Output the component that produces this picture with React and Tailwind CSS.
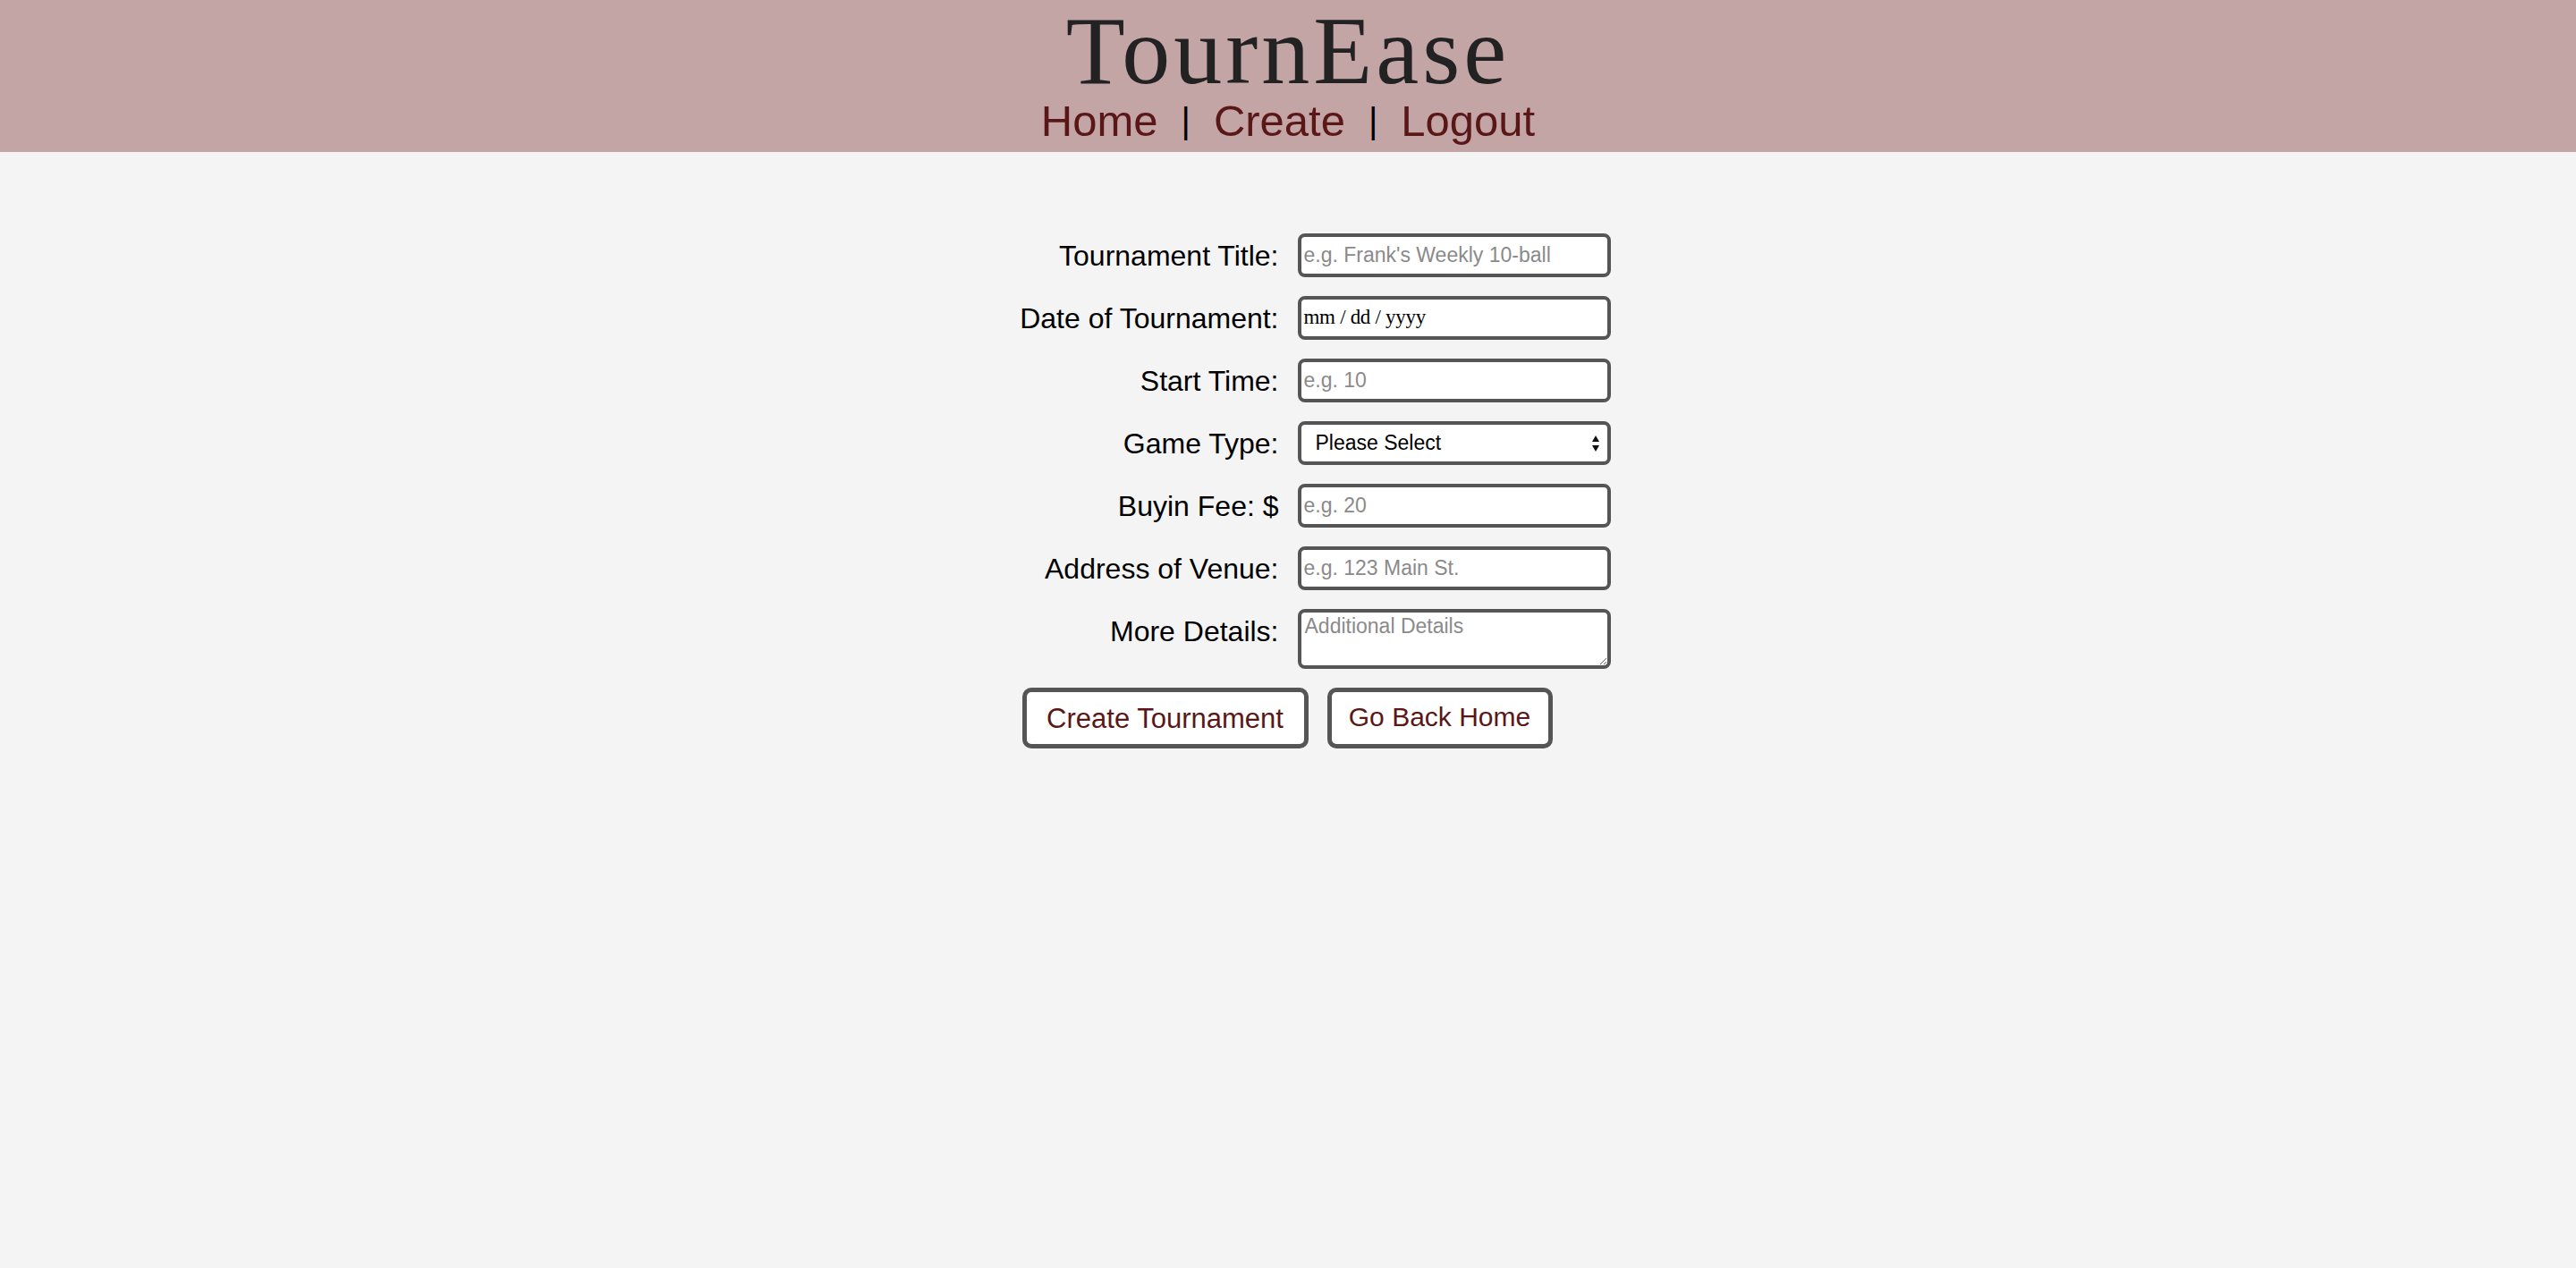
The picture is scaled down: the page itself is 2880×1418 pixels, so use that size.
import React from 'react';

const fields = [
  { label: 'Tournament Title:', placeholder: "e.g. Frank's Weekly 10-ball" },
  { label: 'Date of Tournament:', type: 'date' },
  { label: 'Start Time:', placeholder: 'e.g. 10' },
  { label: 'Game Type:', type: 'select' },
  { label: 'Buyin Fee: $', placeholder: 'e.g. 20' },
  { label: 'Address of Venue:', placeholder: 'e.g. 123 Main St.' },
];

const inputBase =
  "h-[49px] w-[350px] rounded-[8px] border-[4px] border-[#555555] bg-white text-[23px] text-black outline-none font-['Liberation_Sans',Arial,sans-serif]";

const labelCls = 'flex h-[49px] items-center justify-end whitespace-nowrap text-[32px] leading-none text-black';

const Field = ({ field }) => {
  if (field.type === 'date') {
    return (
      <div className={`${inputBase} flex items-center pl-[3px]`}>
        <span className="font-['Liberation_Serif',serif] text-[23px] tracking-[-0.3px]">mm / dd / yyyy</span>
      </div>
    );
  }
  if (field.type === 'select') {
    return (
      <div className="relative">
        <select className={`${inputBase} appearance-none pl-[16px]`} defaultValue="">
          <option value="">Please Select</option>
          <option value="8">8-ball</option>
          <option value="9">9-ball</option>
          <option value="10">10-ball</option>
        </select>
        <svg className="pointer-events-none absolute right-[12px] top-[15px]" width="10" height="20" viewBox="0 0 10 20">
          <path d="M5 1 L9 8 L1 8 Z" fill="#111" />
          <path d="M5 19 L9 12 L1 12 Z" fill="#111" />
        </svg>
      </div>
    );
  }
  return (
    <input
      type="text"
      placeholder={field.placeholder}
      className={`${inputBase} pl-[3px] placeholder:text-[#8a8a8a]`}
    />
  );
};

export default function App() {
  return (
    <div className="min-h-screen bg-[#f4f4f4] font-['Liberation_Sans',Arial,sans-serif]">
      <header className="flex h-[170px] flex-col items-center bg-[#c4a5a6]">
        <h1 className="pt-[11px] font-['Liberation_Serif',serif] text-[108px] font-normal leading-[92px] tracking-[4px] text-[#222222]">
          TournEase
        </h1>
        <nav className="mt-[8px] flex items-center gap-[26px] text-[49px] leading-[49px] text-[#5a1717]">
          <a href="#">Home</a>
          <span className="text-[40px] text-black">|</span>
          <a href="#">Create</a>
          <span className="text-[40px] text-black">|</span>
          <a href="#">Logout</a>
        </nav>
      </header>

      <main className="flex justify-center pl-[61px] pt-[91px]">
        <form className="grid grid-cols-[289px_350px] gap-x-[21px] gap-y-[21px] items-start">
          {fields.map((f) => (
            <React.Fragment key={f.label}>
              <label className={labelCls}>{f.label}</label>
              <Field field={f} />
            </React.Fragment>
          ))}
          <label className={labelCls}>More Details:</label>
          <textarea
            placeholder="Additional Details"
            className="h-[67px] w-[350px] rounded-[8px] border-[4px] border-[#555555] bg-white px-[4px] pt-[1px] text-[23px] leading-tight outline-none placeholder:text-[#8a8a8a]"
          />
          <div className="col-span-2 flex gap-[21px] pl-[2px]">
            <button
              type="submit"
              className="h-[68px] w-[320px] rounded-[10px] border-[5px] border-[#555555] bg-white pt-[3px] text-[31px] text-[#5a1717]"
            >
              Create Tournament
            </button>
            <a
              href="#"
              className="flex h-[68px] w-[252px] items-center justify-center rounded-[10px] border-[5px] border-[#555555] bg-white pb-[3px] text-[30px] text-[#5a1717]"
            >
              Go Back Home
            </a>
          </div>
        </form>
      </main>
    </div>
  );
}
